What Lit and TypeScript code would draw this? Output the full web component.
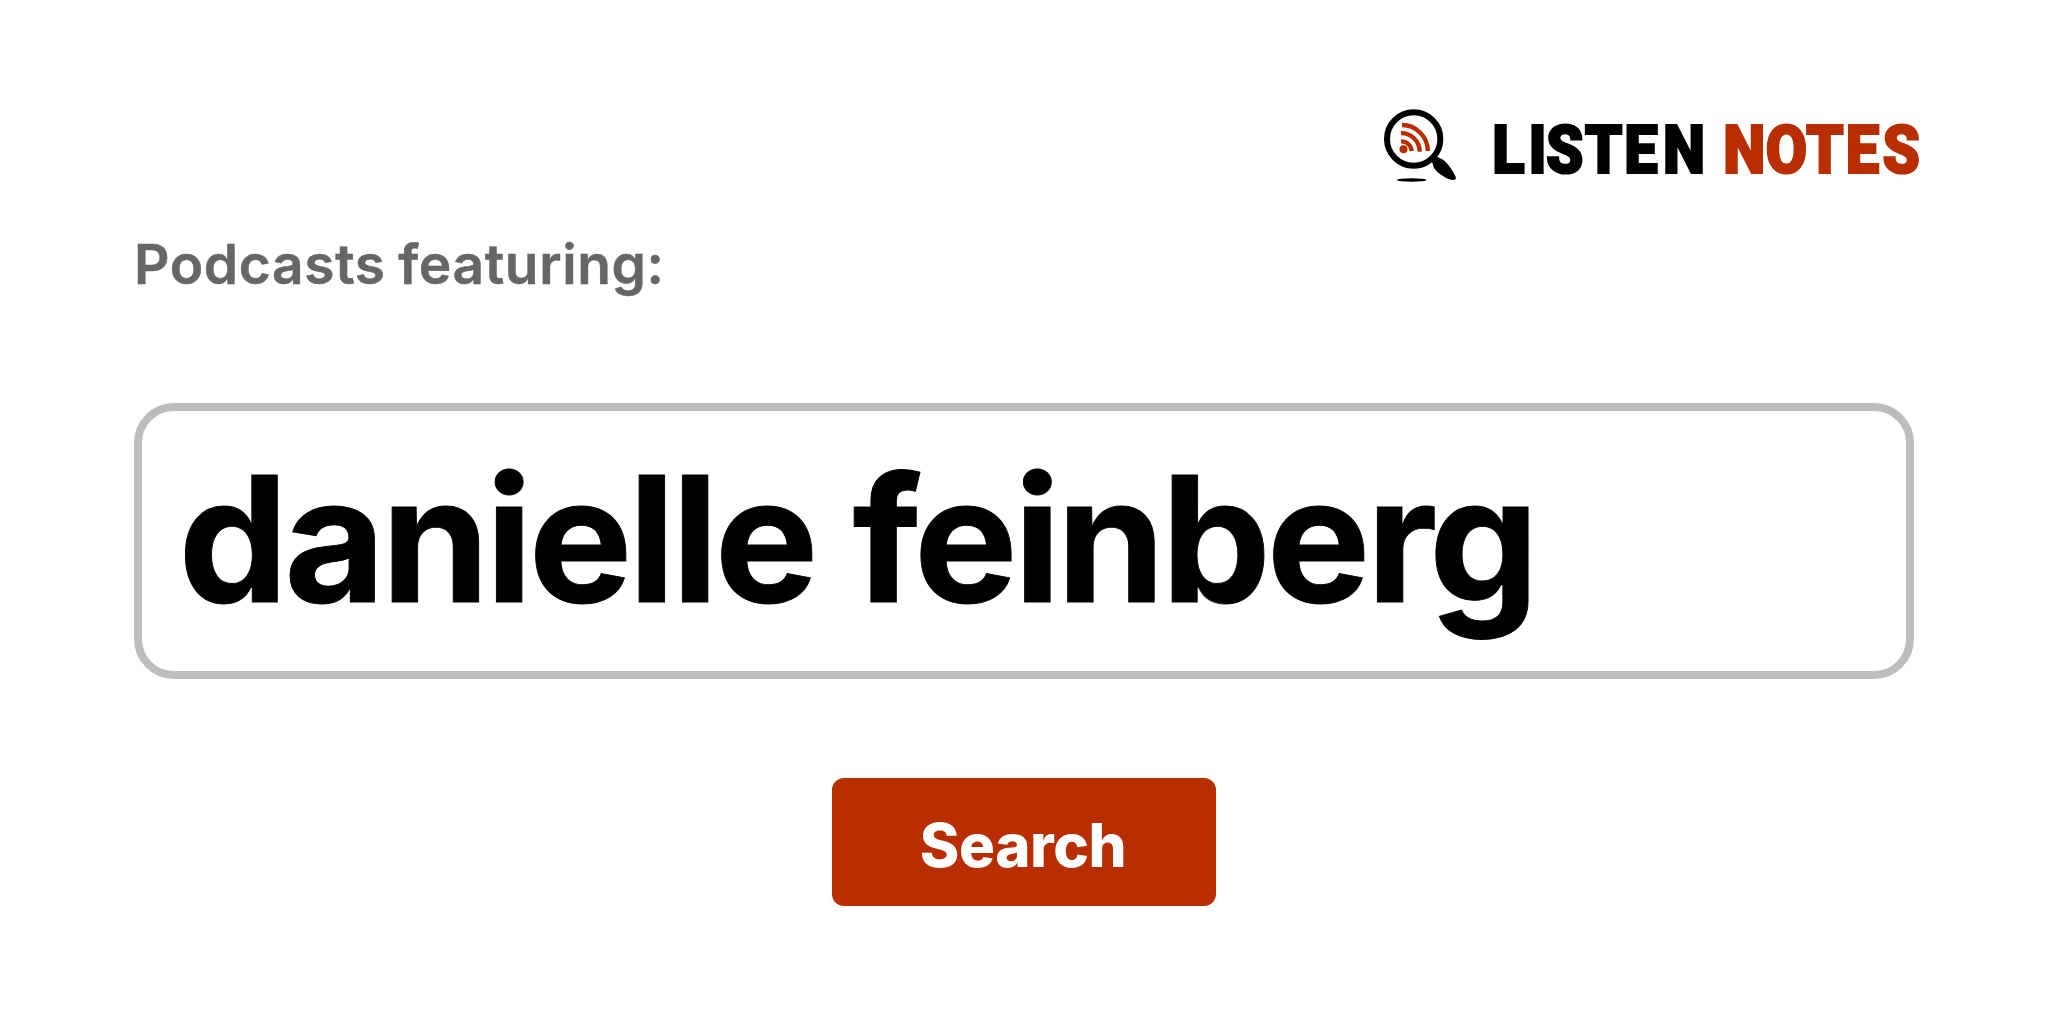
import { html, css, LitElement } from "lit";
import { customElement, property } from "lit/decorators.js";

@customElement("listen-logo")
export class ListenLogo extends LitElement {
  static styles = css`
    :host {
      display: flex;
      height: 76px;
    }

    .icon {
      width: 76px;
      height: 76px;
    }

    .name {
      width: 450px;
      height: 90px;
      margin-left: 24px;
      overflow: visible;
      font: 900 66.5px Roboto, sans-serif;
    }

    .listen {
      fill: #000;
      stroke: #000;
    }

    .notes {
      fill: #b82e00;
      stroke: #b82e00;
    }
  `;

  render() {
    return html`
      <svg class="icon" viewBox="36 36 228 228">
        <circle cx="131" cy="132" r="80" fill="none" stroke="#000" stroke-width="18" />
        <path
          d="M184 197 L199 183 C204 187 208 189 214 191 C230 198 249 227 257 245 C259 251 256 256 248 255 C231 253 203 236 192 219 C188 212 190 205 184 197 Z"
        />
        <ellipse cx="125" cy="255" rx="44" ry="5" />
        <circle cx="100.500" cy="163" r="12" fill="#b82e00" />
        <g fill="none" stroke="#b82e00" stroke-width="13">
          <path d="M96 90 A78 78 0 0 1 173.500 168" />
          <path d="M93 114.500 A55 55 0 0 1 149 170" />
          <path d="M93 139 A31 31 0 0 1 125 168" />
        </g>
      </svg>
      <svg class="name" viewBox="0 0 450 90">
        <g transform="scale(0.9 1)" stroke-width="2.2">
          <text class="listen" x="11.300 51.7 71 114.200 158.200 201.200" y="66">LISTEN</text>
          <text class="notes" x="268 315.200 360.100 404.300 445" y="66">NOTES</text>
        </g>
      </svg>
    `;
  }
}

@customElement("app-root")
export class AppRoot extends LitElement {
  static styles = css`
    :host {
      display: block;
      box-sizing: border-box;
      width: 2048px;
      height: 1024px;
      padding: 107px 134px 0;
      background: #fff;
      font-family: Inter, sans-serif;
      white-space: nowrap;
      overflow: hidden;
    }

    .header {
      display: flex;
      padding-left: 1248px;
    }

    .label {
      margin-top: 48px;
      color: #666;
      font-size: 55px;
      font-weight: 600;
      line-height: 66px;
      letter-spacing: 0.65px;
      word-spacing: -2px;
      -webkit-text-stroke: 0.5px #666;
    }

    .field {
      box-sizing: border-box;
      height: 276px;
      margin-top: 106px;
      padding-left: 36.5px;
      border: 8px solid #bdbdbd;
      border-radius: 40px;
      color: #000;
      font-size: 174px;
      font-weight: 700;
      line-height: 255px;
      letter-spacing: -4px;
      word-spacing: 1px;
      -webkit-text-stroke: 0.9px #000;
    }

    .search {
      display: block;
      width: 384px;
      height: 128px;
      margin: 99px auto 0;
      padding: 5px 2px 0 0;
      border: 0;
      border-radius: 12px;
      background: #b82e00;
      color: #fff;
      font: 770 60px/122px Inter, sans-serif;
      letter-spacing: -0.4px;
    }
  `;

  @property() query = "danielle feinberg";

  render() {
    return html`
      <div class="header"><listen-logo></listen-logo></div>
      <div class="label">Podcasts featuring:</div>
      <div class="field">${this.query}</div>
      <button class="search">Search</button>
    `;
  }
}
